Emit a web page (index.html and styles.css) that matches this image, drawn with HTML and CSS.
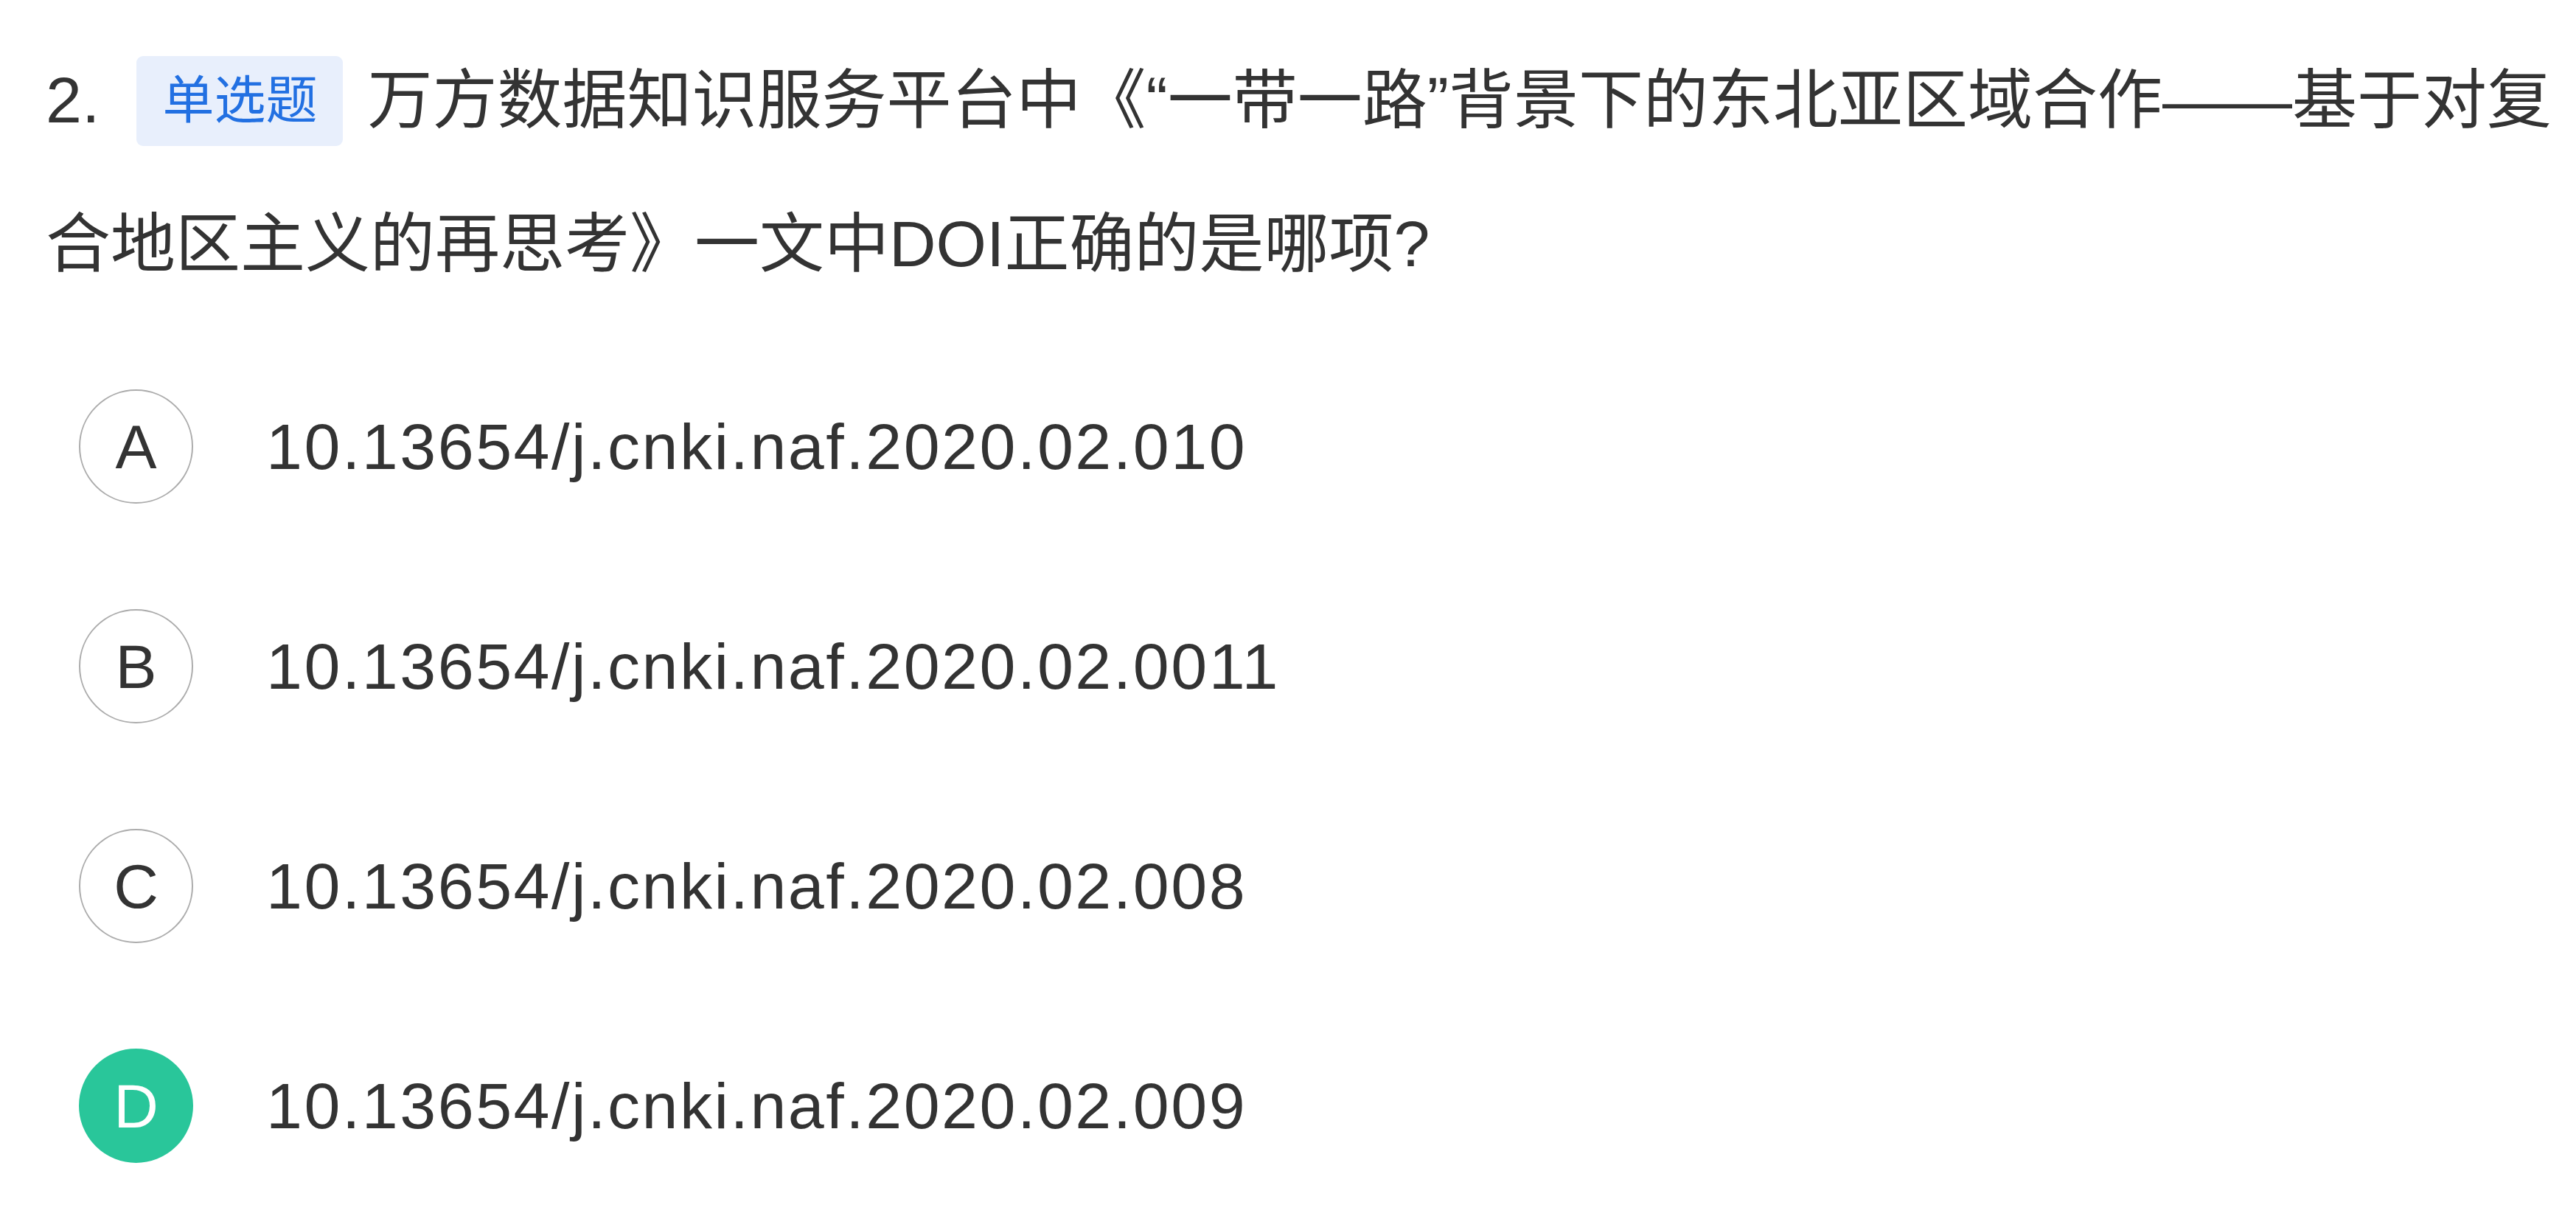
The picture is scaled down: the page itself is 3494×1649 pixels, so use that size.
FILE: index.html
```html
<!DOCTYPE html>
<html lang="zh-CN">
<head>
<meta charset="utf-8">
<title>单选题</title>
<link rel="stylesheet" href="styles.css">
</head>
<body>
<div class="question">
  <div class="stem"><span class="num">2.</span><span class="tag">单选题</span>万方数据知识服务平台中《“一带一路”背景下的东北亚区域合作——基于对复合地区主义的再思考》一文中DOI正确的是哪项?</div>
  <ul class="options">
    <li class="option"><span class="mark">A</span><span class="text">10.13654/j.cnki.naf.2020.02.010</span></li>
    <li class="option"><span class="mark">B</span><span class="text">10.13654/j.cnki.naf.2020.02.0011</span></li>
    <li class="option"><span class="mark">C</span><span class="text">10.13654/j.cnki.naf.2020.02.008</span></li>
    <li class="option selected"><span class="mark">D</span><span class="text">10.13654/j.cnki.naf.2020.02.009</span></li>
  </ul>
</div>
</body>
</html>
```

FILE: styles.css
```css
html, body {
  margin: 0;
  padding: 0;
  background: #ffffff;
}
body {
  font-family: "Liberation Sans", "Noto Sans CJK SC", sans-serif;
  color: #333333;
}
.question {
  padding: 38px 16px 0 62px;
}
.stem {
  font-size: 88px;
  line-height: 195px;
}
.num {
  margin-right: 50px;
}
.tag {
  display: inline-flex;
  align-items: center;
  justify-content: center;
  height: 122px;
  padding: 0 35px;
  margin-right: 33px;
  vertical-align: middle;
  position: relative;
  top: -6px;
  background: #e8effc;
  color: #2270e2;
  font-size: 70px;
  line-height: 1;
  border-radius: 9px;
}
.options {
  list-style: none;
  margin: 100px 0 0 0;
  padding: 0 0 0 45px;
  display: flex;
  flex-direction: column;
  gap: 143px;
}
.option {
  display: flex;
  align-items: center;
  gap: 99px;
}
.mark {
  box-sizing: border-box;
  width: 155px;
  height: 155px;
  border: 2px solid #acacac;
  border-radius: 50%;
  display: flex;
  align-items: center;
  justify-content: center;
  font-size: 84px;
  color: #333333;
  line-height: 1;
}
.selected .mark {
  background: #29c69a;
  border-color: #29c69a;
  color: #ffffff;
}
.text {
  font-size: 88px;
  letter-spacing: 2.5px;
  line-height: 1;
}
```
